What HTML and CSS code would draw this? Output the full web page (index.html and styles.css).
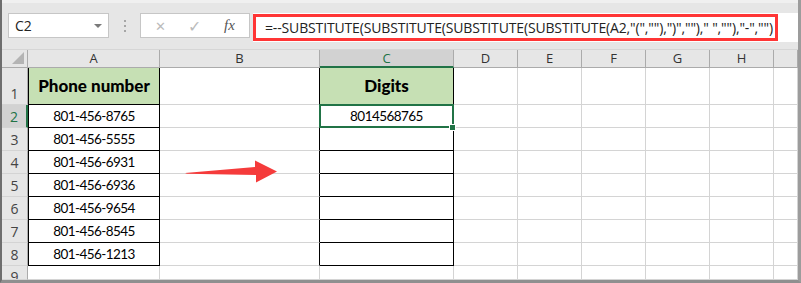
FILE: index.html
```html
<!DOCTYPE html>
<html lang="en">
<head>
    <meta charset="UTF-8">
    <title>Remove characters from phone numbers</title>
    <link rel="stylesheet" href="styles.css">
</head>
<body>
    <div class="window">
        <div class="toolbar">
            <div class="namebox">
                <span class="ref">C2</span>
                <span class="caret"></span>
            </div>
            <div class="grip"><i></i><i></i><i></i></div>
            <div class="fxbox">
                <span class="btn-x">&#x2715;</span>
                <span class="btn-ok">&#x2713;</span>
                <span class="btn-fx">fx</span>
            </div>
            <div class="formula">
                <div class="callout">=--SUBSTITUTE(SUBSTITUTE(SUBSTITUTE(SUBSTITUTE(A2,"(",""),")",""),"&nbsp;",""),"-","")</div>
            </div>
        </div>

        <div class="sheet">
            <div class="row head">
                <div class="rh corner"><span class="tri"></span></div>
                <div class="cell ca">A</div>
                <div class="cell cb">B</div>
                <div class="cell cc active">C</div>
                <div class="cell cd">D</div>
                <div class="cell cd">E</div>
                <div class="cell cd">F</div>
                <div class="cell cd">G</div>
                <div class="cell cd">H</div>
                <div class="cell ci"></div>
            </div>
            <div class="row r1">
                <div class="rh">1</div>
                <div class="cell ca tbl title">Phone number</div>
                <div class="cell cb edge"></div>
                <div class="cell cc tbl title">Digits</div>
                <div class="cell cd"></div><div class="cell cd"></div><div class="cell cd"></div><div class="cell cd"></div><div class="cell cd"></div><div class="cell ci"></div>
            </div>
            <div class="row">
                <div class="rh active">2</div>
                <div class="cell ca tbl">801-456-8765</div>
                <div class="cell cb edge"></div>
                <div class="cell cc tbl selected">8014568765<span class="handle"></span></div>
                <div class="cell cd"></div><div class="cell cd"></div><div class="cell cd"></div><div class="cell cd"></div><div class="cell cd"></div><div class="cell ci"></div>
            </div>
            <div class="row">
                <div class="rh">3</div>
                <div class="cell ca tbl">801-456-5555</div>
                <div class="cell cb edge"></div>
                <div class="cell cc tbl"></div>
                <div class="cell cd"></div><div class="cell cd"></div><div class="cell cd"></div><div class="cell cd"></div><div class="cell cd"></div><div class="cell ci"></div>
            </div>
            <div class="row">
                <div class="rh">4</div>
                <div class="cell ca tbl">801-456-6931</div>
                <div class="cell cb edge"></div>
                <div class="cell cc tbl"></div>
                <div class="cell cd"></div><div class="cell cd"></div><div class="cell cd"></div><div class="cell cd"></div><div class="cell cd"></div><div class="cell ci"></div>
            </div>
            <div class="row">
                <div class="rh">5</div>
                <div class="cell ca tbl">801-456-6936</div>
                <div class="cell cb edge"></div>
                <div class="cell cc tbl"></div>
                <div class="cell cd"></div><div class="cell cd"></div><div class="cell cd"></div><div class="cell cd"></div><div class="cell cd"></div><div class="cell ci"></div>
            </div>
            <div class="row">
                <div class="rh">6</div>
                <div class="cell ca tbl">801-456-9654</div>
                <div class="cell cb edge"></div>
                <div class="cell cc tbl"></div>
                <div class="cell cd"></div><div class="cell cd"></div><div class="cell cd"></div><div class="cell cd"></div><div class="cell cd"></div><div class="cell ci"></div>
            </div>
            <div class="row">
                <div class="rh">7</div>
                <div class="cell ca tbl">801-456-8545</div>
                <div class="cell cb edge"></div>
                <div class="cell cc tbl"></div>
                <div class="cell cd"></div><div class="cell cd"></div><div class="cell cd"></div><div class="cell cd"></div><div class="cell cd"></div><div class="cell ci"></div>
            </div>
            <div class="row">
                <div class="rh">8</div>
                <div class="cell ca tbl">801-456-1213</div>
                <div class="cell cb edge"></div>
                <div class="cell cc tbl"></div>
                <div class="cell cd"></div><div class="cell cd"></div><div class="cell cd"></div><div class="cell cd"></div><div class="cell cd"></div><div class="cell ci"></div>
            </div>
            <div class="row r9">
                <div class="rh">9</div>
                <div class="cell ca"></div>
                <div class="cell cb"></div>
                <div class="cell cc"></div>
                <div class="cell cd"></div><div class="cell cd"></div><div class="cell cd"></div><div class="cell cd"></div><div class="cell cd"></div><div class="cell ci"></div>
            </div>
        </div>

        <!-- annotation arrow over the sheet -->
        <svg class="arrow" width="96" height="26" viewBox="0 0 96 26">
            <polygon points="0,13 70,7 70,0.5 92,11.5 71,22.5 71,15 2,13.8" fill="#f53b3b"/>
        </svg>
    </div>
</body>
</html>
```

FILE: styles.css
```css
body {
    margin: 0;
    background: #ffffff;
}
.window {
    position: relative;
    width: 801px;
    height: 283px;
    box-sizing: border-box;
    border-left: 2px solid #6e6e6e;
    border-right: 3px solid #9c9c9c;
    border-bottom: 3px solid #8f8f8f;
    background: #e6e6e6;
    font-family: "Open Sans", "Liberation Sans", sans-serif;
    overflow: hidden;
}

/* formula bar */
.toolbar {
    height: 49px;
    box-sizing: border-box;
    border-top: 3px solid #f0f0f0;
    display: flex;
    align-items: flex-start;
    padding: 10px 0 0 6px;
    background: #e6e6e6;
}
.namebox {
    width: 101px;
    height: 25px;
    box-sizing: border-box;
    background: #fff;
    border: 1px solid #c6c6c6;
    display: flex;
    align-items: center;
    justify-content: space-between;
    padding: 0 6px 0 6px;
}
.ref {
    font-size: 14px;
    color: #222;
}
.caret {
    width: 0;
    height: 0;
    border-left: 4px solid transparent;
    border-right: 4px solid transparent;
    border-top: 4px solid #7a7a7a;
}
.grip {
    width: 31px;
    height: 25px;
    display: flex;
    flex-direction: column;
    align-items: center;
    justify-content: center;
    gap: 3px;
}
.grip i {
    width: 2px;
    height: 2px;
    background: #a6a6a6;
}
.fxbox {
    width: 110px;
    height: 25px;
    box-sizing: border-box;
    background: #fff;
    border: 1px solid #c6c6c6;
    display: flex;
    align-items: center;
    padding-left: 14px;
}
.btn-x {
    font-size: 13px;
    color: #bbbbbb;
    width: 33px;
}
.btn-ok {
    font-size: 16px;
    color: #bbbbbb;
    width: 36px;
}
.btn-fx {
    font-family: "Liberation Serif", serif;
    font-style: italic;
    font-size: 15px;
    color: #555;
}
.formula {
    flex: 1;
    margin: 0 0 0 3px;
    height: 29px;
    background: #fff;
}
.callout {
    width: 525px;
    height: 27px;
    box-sizing: border-box;
    margin-top: 1px;
    border: 3px solid #ff3535;
    padding-left: 9px;
    font-family: "Open Sans", sans-serif;
    font-size: 14px;
    line-height: 22px;
    letter-spacing: -0.15px;
    color: #222;
    white-space: nowrap;
}

/* grid */
.sheet {
    background: #fff;
    border-top: 1px solid #d6d6d6;
}
.row {
    display: flex;
    height: 23px;
}
.row.head {
    height: 18px;
    background: #e6e6e6;
}
.row.r1 { height: 37px; }
.row.r9 {
    height: 14px;
    overflow: hidden;
}
.rh {
    width: 26px;
    flex: none;
    box-sizing: border-box;
    background: #e6e6e6;
    border-right: 1px solid #ababab;
    border-bottom: 1px solid #d4d4d4;
    font-size: 14px;
    color: #444;
    text-align: center;
    display: flex;
    align-items: flex-end;
    justify-content: center;
    line-height: 21px;
}
.r9 .rh {
    align-items: flex-start;
    line-height: 22px;
    overflow: hidden;
}
.rh.active {
    background: #d2d2d2;
    color: #217346;
    border-right: 2px solid #217346;
}
.corner {
    position: relative;
    border-bottom: 1px solid #ababab;
}
.tri {
    position: absolute;
    right: 3px;
    bottom: 3px;
    width: 0;
    height: 0;
    border-left: 12px solid transparent;
    border-bottom: 12px solid #b4b4b4;
}
.cell {
    flex: none;
    box-sizing: border-box;
    border-right: 1px solid #d4d4d4;
    border-bottom: 1px solid #d4d4d4;
    font-family: "Lato", sans-serif;
    font-size: 13.5px;
    letter-spacing: -0.55px;
    color: #000;
    text-align: center;
    line-height: 22px;
}
.head .cell {
    font-family: "Open Sans", sans-serif;
    font-size: 13px;
    letter-spacing: 0;
    line-height: 17px;
    color: #333;
    border-right: 1px solid #ababab;
    border-bottom: 1px solid #ababab;
}
.head .cell.active {
    background: #d2d2d2;
    color: #217346;
    border-bottom: 2px solid #217346;
}
.ca { width: 132px; }
.cb { width: 160px; }
.cc { width: 134px; }
.cd { width: 64px; }
.ci { width: 24px; }
.tbl {
    border-right: 1px solid #000;
    border-bottom: 1px solid #000;
}
.ca.tbl { border-left: 1px solid #000; }
.edge { border-right: 1px solid #000; }
.title {
    background: #c6e0b4;
    font-weight: 900;
    font-size: 17px;
    letter-spacing: 0;
    line-height: 36px;
}
.selected {
    position: relative;
}
.selected::after {
    content: "";
    position: absolute;
    left: -1px;
    top: -1px;
    right: -1px;
    bottom: -1px;
    border: 2px solid #217346;
}
.handle {
    position: absolute;
    right: -3px;
    bottom: -4px;
    width: 5px;
    height: 5px;
    background: #217346;
    border: 1px solid #fff;
    z-index: 1;
}

.arrow {
    position: absolute;
    left: 183px;
    top: 160px;
}
```
